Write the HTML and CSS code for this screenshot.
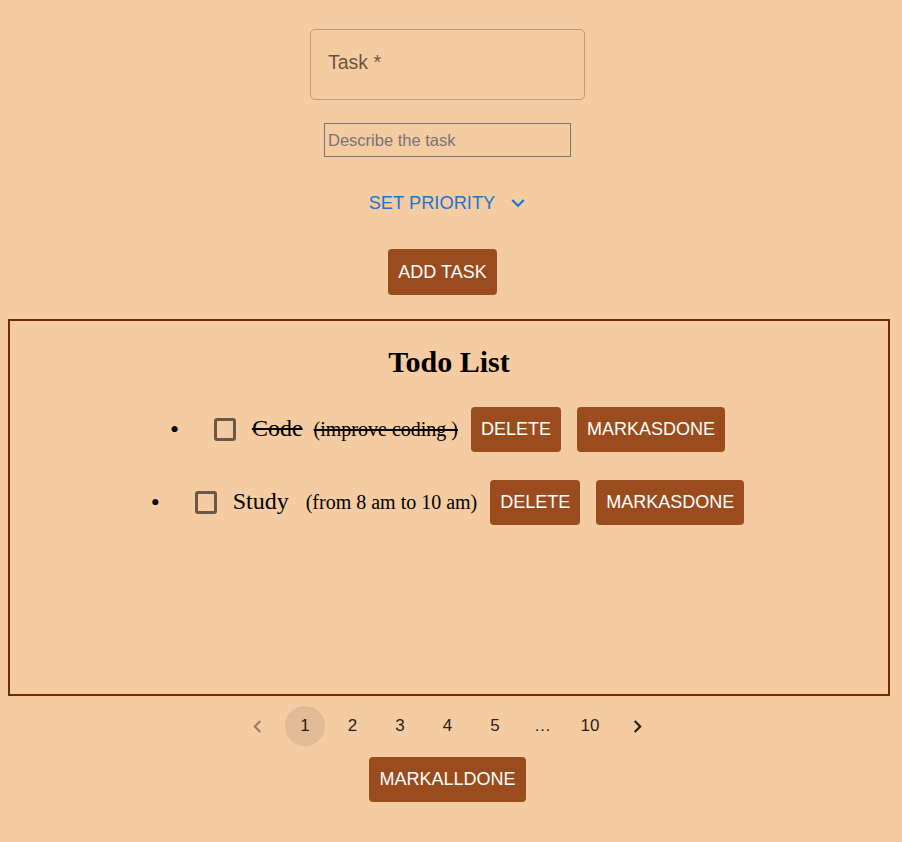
FILE: index.html
```html
<!DOCTYPE html>
<html lang="en">
<head>
<meta charset="utf-8">
<title>Todo</title>
<link rel="stylesheet" href="styles.css">
</head>
<body>
<div class="form">
  <div class="task-field"><span class="task-label">Task *</span></div>
  <input class="describe" type="text" placeholder="Describe the task">
  <button class="priority" type="button">SET PRIORITY
    <svg class="expand" viewBox="0 0 24 24" width="26" height="26"><path d="M16.59 8.59 12 13.17 7.41 8.59 6 10l6 6 6-6z" fill="currentColor"/></svg>
  </button>
  <button class="btn add" type="button">ADD TASK</button>
</div>

<section class="todo-box">
  <h2 class="todo-title">Todo List</h2>
  <ul class="todo-list">
    <li class="todo-item">
      <span class="bullet">•</span>
      <span class="check"></span>
      <span class="title done">Code</span>
      <span class="desc done">(improve coding )</span>
      <button class="btn delete" type="button">DELETE</button>
      <button class="btn" type="button">MARKASDONE</button>
    </li>
    <li class="todo-item">
      <span class="bullet">•</span>
      <span class="check"></span>
      <span class="title wide">Study</span>
      <span class="desc">(from 8 am to 10 am)</span>
      <button class="btn delete" type="button">DELETE</button>
      <button class="btn" type="button">MARKASDONE</button>
    </li>
  </ul>
</section>

<nav class="pager">
  <span class="page nav disabled"><svg viewBox="0 0 24 24" width="25" height="25"><path d="M15.41 7.41 14 6l-6 6 6 6 1.41-1.41L10.83 12z" fill="currentColor"/></svg></span>
  <span class="page current">1</span>
  <span class="page">2</span>
  <span class="page">3</span>
  <span class="page">4</span>
  <span class="page">5</span>
  <span class="page">…</span>
  <span class="page">10</span>
  <span class="page nav"><svg viewBox="0 0 24 24" width="25" height="25"><path d="M10 6 8.59 7.41 13.17 12l-4.58 4.59L10 18l6-6z" fill="currentColor"/></svg></span>
</nav>

<div class="footer">
  <button class="btn" type="button">MARKALLDONE</button>
</div>
</body>
</html>
```

FILE: styles.css
```css
html, body {
  background: #f5cba2;
}
body {
  margin: 8px;
  font-family: "Liberation Sans", Arial, sans-serif;
  color: #000;
}
.form {
  display: flex;
  flex-direction: column;
  align-items: center;
  margin-right: 7px;
}
.task-field {
  box-sizing: border-box;
  margin-top: 21px;
  width: 275px;
  height: 71px;
  border: 1px solid rgba(0, 0, 0, 0.23);
  border-radius: 5px;
  display: flex;
  align-items: center;
  padding-left: 17px;
}
.task-label {
  font-size: 19.5px;
  color: rgba(0, 0, 0, 0.6);
  margin-top: -4px;
}
.describe {
  box-sizing: border-box;
  margin-top: 23px;
  width: 247px;
  height: 34px;
  border: 1px solid #767676;
  background: transparent;
  padding: 0 3px;
  font-family: "Liberation Sans", Arial, sans-serif;
  font-size: 16.5px;
  outline: none;
}
.describe::placeholder {
  color: #757575;
}
.priority {
  margin-top: 28px;
  margin-left: 5px;
  height: 36px;
  border: 0;
  background: transparent;
  color: #1976d2;
  font-family: "Liberation Sans", Arial, sans-serif;
  font-size: 18.3px;
  display: flex;
  align-items: center;
  gap: 10px;
  padding: 0 8px;
  cursor: pointer;
}
.expand {
  display: block;
}
.btn {
  box-sizing: border-box;
  height: 45px;
  border: 0;
  border-radius: 4px;
  background: #9a4c1e;
  color: #fff;
  font-family: "Liberation Sans", Arial, sans-serif;
  font-size: 18px;
  padding: 0 10px;
  cursor: pointer;
  white-space: nowrap;
}
.add {
  margin-top: 28px;
  margin-right: 10px;
  height: 46px;
  padding: 0 10.5px;
}
.todo-box {
  margin: 24px 4px 0 0;
  height: 377px;
  box-sizing: border-box;
  border: 2px solid #6e2c00;
}
.todo-title {
  margin: 24px 0 0;
  text-align: center;
  font-family: "Liberation Serif", "Times New Roman", serif;
  font-size: 30px;
  font-weight: bold;
  line-height: 33px;
}
.todo-list {
  list-style: none;
  margin: 29px 0 0;
  padding: 0;
}
.todo-item {
  display: flex;
  justify-content: center;
  align-items: center;
  margin-bottom: 28px;
  padding-right: 3px;
  font-family: "Liberation Serif", "Times New Roman", serif;
}
.bullet {
  font-size: 26px;
  line-height: 26px;
  width: 9px;
  margin-right: 35px;
}
.check {
  box-sizing: border-box;
  width: 22px;
  height: 23px;
  border: 3px solid #6b5845;
  border-radius: 3px;
  margin-right: 16px;
}
.title {
  font-size: 24px;
  margin-right: 11px;
  margin-top: -2px;
}
.title.wide {
  margin-right: 17px;
}
.desc {
  font-size: 20px;
  margin-right: 13px;
}
.done {
  text-decoration: line-through;
}
.delete {
  margin-right: 16px;
}
.pager {
  margin-top: 10px;
  margin-right: 7px;
  display: flex;
  justify-content: center;
  gap: 7.5px;
}
.page {
  width: 40px;
  height: 40px;
  border-radius: 50%;
  display: flex;
  align-items: center;
  justify-content: center;
  font-size: 17px;
  color: rgba(0, 0, 0, 0.87);
}
.page.current {
  background: rgba(0, 0, 0, 0.08);
}
.page.disabled {
  color: rgba(0, 0, 0, 0.38);
}
.page svg {
  display: block;
}
.footer {
  margin-top: 11px;
  margin-right: 7px;
  display: flex;
  justify-content: center;
}
```
